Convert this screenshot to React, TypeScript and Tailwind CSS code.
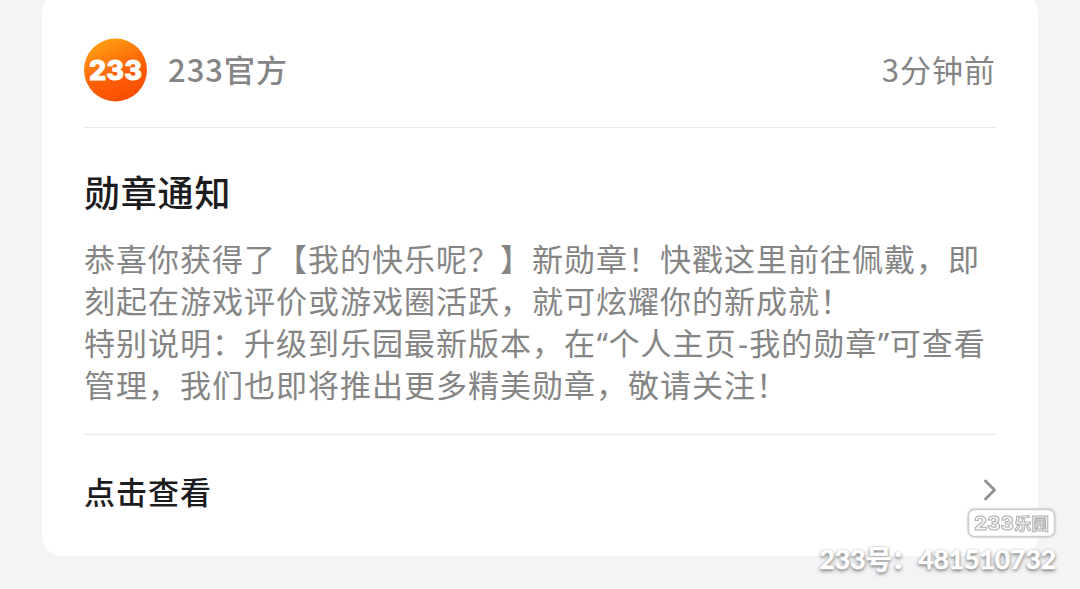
import type { ReactNode } from 'react';
import { ChevronRight } from 'lucide-react';

const messageLines: ReactNode[] = [
  '恭喜你获得了【我的快乐呢？】新勋章！快戳这里前往佩戴，即',
  '刻起在游戏评价或游戏圈活跃，就可炫耀你的新成就！',
  <>
    特别说明：升级到乐园最新版本，在<Punct>“</Punct>个人主页<Punct>-</Punct>我的勋章
    <Punct>”</Punct>可查看
  </>,
  '管理，我们也即将推出更多精美勋章，敬请关注！',
];

function Punct({ children }: { children: ReactNode }) {
  return (
    <span className="inline-block w-[12.6px] text-center font-['Noto_Sans',sans-serif] tracking-normal">
      {children}
    </span>
  );
}

function Avatar() {
  return (
    <svg viewBox="0 0 64 64" className="-ml-px size-16 shrink-0">
      <defs>
        <linearGradient id="avatar" x1="0.2" y1="0" x2="0.65" y2="1">
          <stop offset="0" stopColor="#ffa413" />
          <stop offset="0.6" stopColor="#fd5f07" />
          <stop offset="1" stopColor="#fb4d02" />
        </linearGradient>
      </defs>
      <circle cx="32.5" cy="32" r="31.5" fill="url(#avatar)" />
      <text
        x="6"
        y="41.5"
        textLength="53"
        lengthAdjust="spacingAndGlyphs"
        fill="#fff"
        stroke="#fff"
        strokeWidth="0.8"
        className="font-['Inter',sans-serif] text-[27px] font-extrabold"
      >
        233
      </text>
    </svg>
  );
}

function Watermark() {
  return (
    <div className="absolute right-[24px] bottom-[11px] flex flex-col items-end">
      <svg viewBox="0 0 92 32" className="h-8 w-[92px] drop-shadow-[0_0_1px_#bbb]">
        <rect x="4.5" y="1.5" width="86" height="27" rx="6" fill="#fff" stroke="#cdcdcf" strokeWidth="1.4" />
        <g fill="#f4f4f5" stroke="#b0b0b2" strokeWidth="1">
          <text
            x="10"
            y="22"
            textLength="40"
            lengthAdjust="spacingAndGlyphs"
            className="font-['Inter',sans-serif] text-[19px] font-extrabold"
          >
            233
          </text>
          <text
            x="50"
            y="22"
            textLength="35"
            className="font-['Noto_Sans_CJK_SC',sans-serif] text-[17.5px] font-bold"
          >
            乐园
          </text>
        </g>
      </svg>
      <p className="flex h-[38px] items-center font-['Lato','Noto_Sans_CJK_SC',sans-serif] text-[26.4px] leading-none font-bold whitespace-nowrap text-white [-webkit-text-stroke:0.6px_white] [text-shadow:0_1px_3px_#777,0_2px_4px_#999]">
        233号：481510732
      </p>
    </div>
  );
}

export default function App() {
  return (
    <main className="relative h-[589px] w-full overflow-hidden bg-[#f4f4f6] px-[42px] font-['Noto_Sans_CJK_SC',sans-serif] text-[#858585]">
      <article className="-mt-2 flex h-[564px] flex-col rounded-[20px] bg-white px-[42px] pt-2">
        <header className="flex h-32 items-center border-b border-[#ebebeb] pt-3">
          <Avatar />
          <span className="ml-[21px] text-[31px] font-medium tracking-[1px]">233官方</span>
          <time className="ml-auto text-[31px] tracking-[1px]">3分钟前</time>
        </header>

        <section className="h-[307px] border-b border-[#ebebeb] pt-9">
          <h1 className="text-[36px] leading-[54px] font-medium tracking-[0.8px] text-[#1c1c1e]">勋章通知</h1>
          <div className="mt-[19px] text-[31px] leading-[42px] tracking-[1px] whitespace-nowrap">
            {messageLines.map((line, i) => (
              <p key={i} className="h-[42px]">
                {line}
              </p>
            ))}
          </div>
        </section>

        <button type="button" className="flex flex-1 items-center justify-between pb-2">
          <span className="text-[31px] font-medium tracking-[1px] text-[#1c1c1e]">点击查看</span>
          <ChevronRight size={36} strokeWidth={1.9} className="-mt-[3px] -mr-3 text-[#929292]" />
        </button>
      </article>
      <Watermark />
    </main>
  );
}
